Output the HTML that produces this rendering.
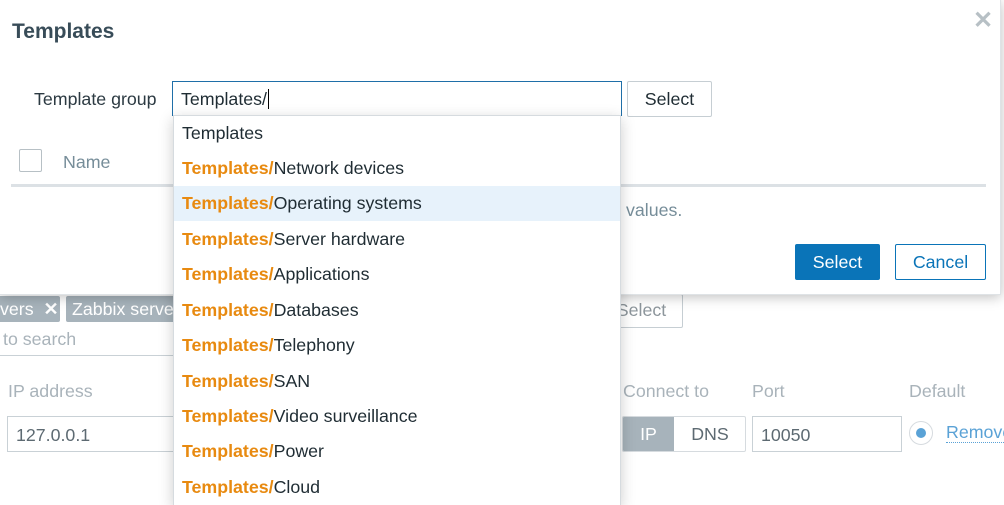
<!DOCTYPE html>
<html><head><meta charset="utf-8"><style>
*{box-sizing:border-box;margin:0;padding:0}
html,body{width:1004px;height:505px;overflow:hidden}
body{background:#fff;font-family:"Liberation Sans",Arial,sans-serif;font-size:17.8px;color:#1f2c33;position:relative}
.a{position:absolute}
.bg{color:#a9b3ba}
.chip{background:#a7b3bb;color:#fff;height:26px;line-height:26px;border-radius:2px;padding:0 6px;white-space:nowrap;overflow:hidden}
.modal{left:0;top:0;width:1001px;height:295px;background:#fff;box-shadow:0 2px 12px rgba(0,0,0,.25);border-right:1px solid #dfe3e6;border-bottom:1px solid #dfe3e6}
.btn{border:1px solid #c6ced3;border-radius:2px;background:#fff;text-align:center}
.dd{left:173px;top:115px;width:448px;height:390px;background:#fff;border:1px solid #d6dbdf;border-bottom:none;box-shadow:0 4px 14px rgba(0,0,0,.2);overflow:hidden}
.it{position:absolute;left:0;width:446px;height:35px;line-height:35px;padding-left:8px;white-space:nowrap}
.it b{color:#e88a10}
</style></head><body>
<div class="a chip" style="left:-6px;top:296px;width:66px;">vers&nbsp; <b>✕</b></div>
<div class="a chip" style="left:66px;top:296px;width:110px;">Zabbix serve</div>
<div class="a bg" style="left:3px;top:329px;">to search</div>
<div class="a" style="left:0;top:355px;width:173px;height:1px;background:#c9d1d6"></div>
<div class="a btn bg" style="left:600px;top:294px;width:83px;height:34px;line-height:30px;color:#8d969c">Select</div>
<div class="a bg" style="left:8px;top:381px;">IP address</div>
<div class="a" style="left:7px;top:416px;width:170px;height:36px;border:1px solid #c9d1d6;padding:8px 8px;color:#5d6a72">127.0.0.1</div>
<div class="a bg" style="left:623px;top:381px;">Connect to</div>
<div class="a bg" style="left:752px;top:381px;">Port</div>
<div class="a bg" style="left:909px;top:381px;">Default</div>
<div class="a" style="left:622px;top:416px;width:124px;height:36px;border:1px solid #d6dbdf;border-radius:2px;overflow:hidden">
 <div class="a" style="left:0;top:0;width:51px;height:34px;background:#a7b3bb;color:#fff;text-align:center;line-height:34px">IP</div>
 <div class="a" style="left:51px;top:0;width:72px;height:34px;color:#5d6a72;text-align:center;line-height:34px">DNS</div>
</div>
<div class="a" style="left:752px;top:416px;width:150px;height:36px;border:1px solid #c9d1d6;padding:8px 8px;color:#5d6a72">10050</div>
<div class="a" style="left:909px;top:421px;width:24px;height:24px;border:1px solid #d6dbdf;border-radius:50%"><div class="a" style="left:6px;top:6px;width:10px;height:10px;border-radius:50%;background:#5aa2d6"></div></div>
<div class="a" style="left:946px;top:422px;color:#5aa2d6;border-bottom:1px dotted #5aa2d6;line-height:20px;white-space:nowrap">Remove</div>

<div class="a modal">
 <div class="a" style="left:12px;top:20px;font-size:21px;font-weight:bold;color:#384c58">Templates</div>
 <div class="a" style="left:973px;top:6px;font-size:24px;color:#b7c0c5;font-weight:bold">✕</div>
 <div class="a" style="left:34px;top:89px;color:#2c3a42">Template group</div>
 <div class="a" style="left:172px;top:81px;width:450px;height:35px;border:1px solid #1f6fa8;border-bottom:none;padding:7px 8px;color:#1f2c33">Templates/<span style="border-left:1px solid #000;margin-left:1px"></span></div>
 <div class="a btn" style="left:627px;top:81px;width:85px;height:36px;line-height:34px;color:#1f2c33">Select</div>
 <div class="a" style="left:19px;top:149px;width:23px;height:23px;border:1px solid #b7c0c5;border-radius:2px"></div>
 <div class="a" style="left:63px;top:152px;color:#768d99">Name</div>
 <div class="a" style="left:11px;top:184px;width:975px;height:3px;background:#dce1e5"></div>
 <div class="a" style="left:626px;top:200px;color:#768d99">values.</div>
 <div class="a" style="left:795px;top:244px;width:85px;height:36px;background:#0a74b8;color:#fff;border-radius:2px;text-align:center;line-height:36px">Select</div>
 <div class="a" style="left:895px;top:244px;width:91px;height:36px;border:1px solid #0a74b8;color:#0a74b8;border-radius:2px;text-align:center;line-height:34px">Cancel</div>
</div>

<div class="a dd">
 <div class="it" style="top:0">Templates</div>
 <div class="it" style="top:35px"><b>Templates/</b>Network devices</div>
 <div class="it" style="top:70px;background:#e7f2fb"><b>Templates/</b>Operating systems</div>
 <div class="it" style="top:106px"><b>Templates/</b>Server hardware</div>
 <div class="it" style="top:141px"><b>Templates/</b>Applications</div>
 <div class="it" style="top:177px"><b>Templates/</b>Databases</div>
 <div class="it" style="top:212px"><b>Templates/</b>Telephony</div>
 <div class="it" style="top:248px"><b>Templates/</b>SAN</div>
 <div class="it" style="top:283px"><b>Templates/</b>Video surveillance</div>
 <div class="it" style="top:318px"><b>Templates/</b>Power</div>
 <div class="it" style="top:354px"><b>Templates/</b>Cloud</div>
</div>
</body></html>
